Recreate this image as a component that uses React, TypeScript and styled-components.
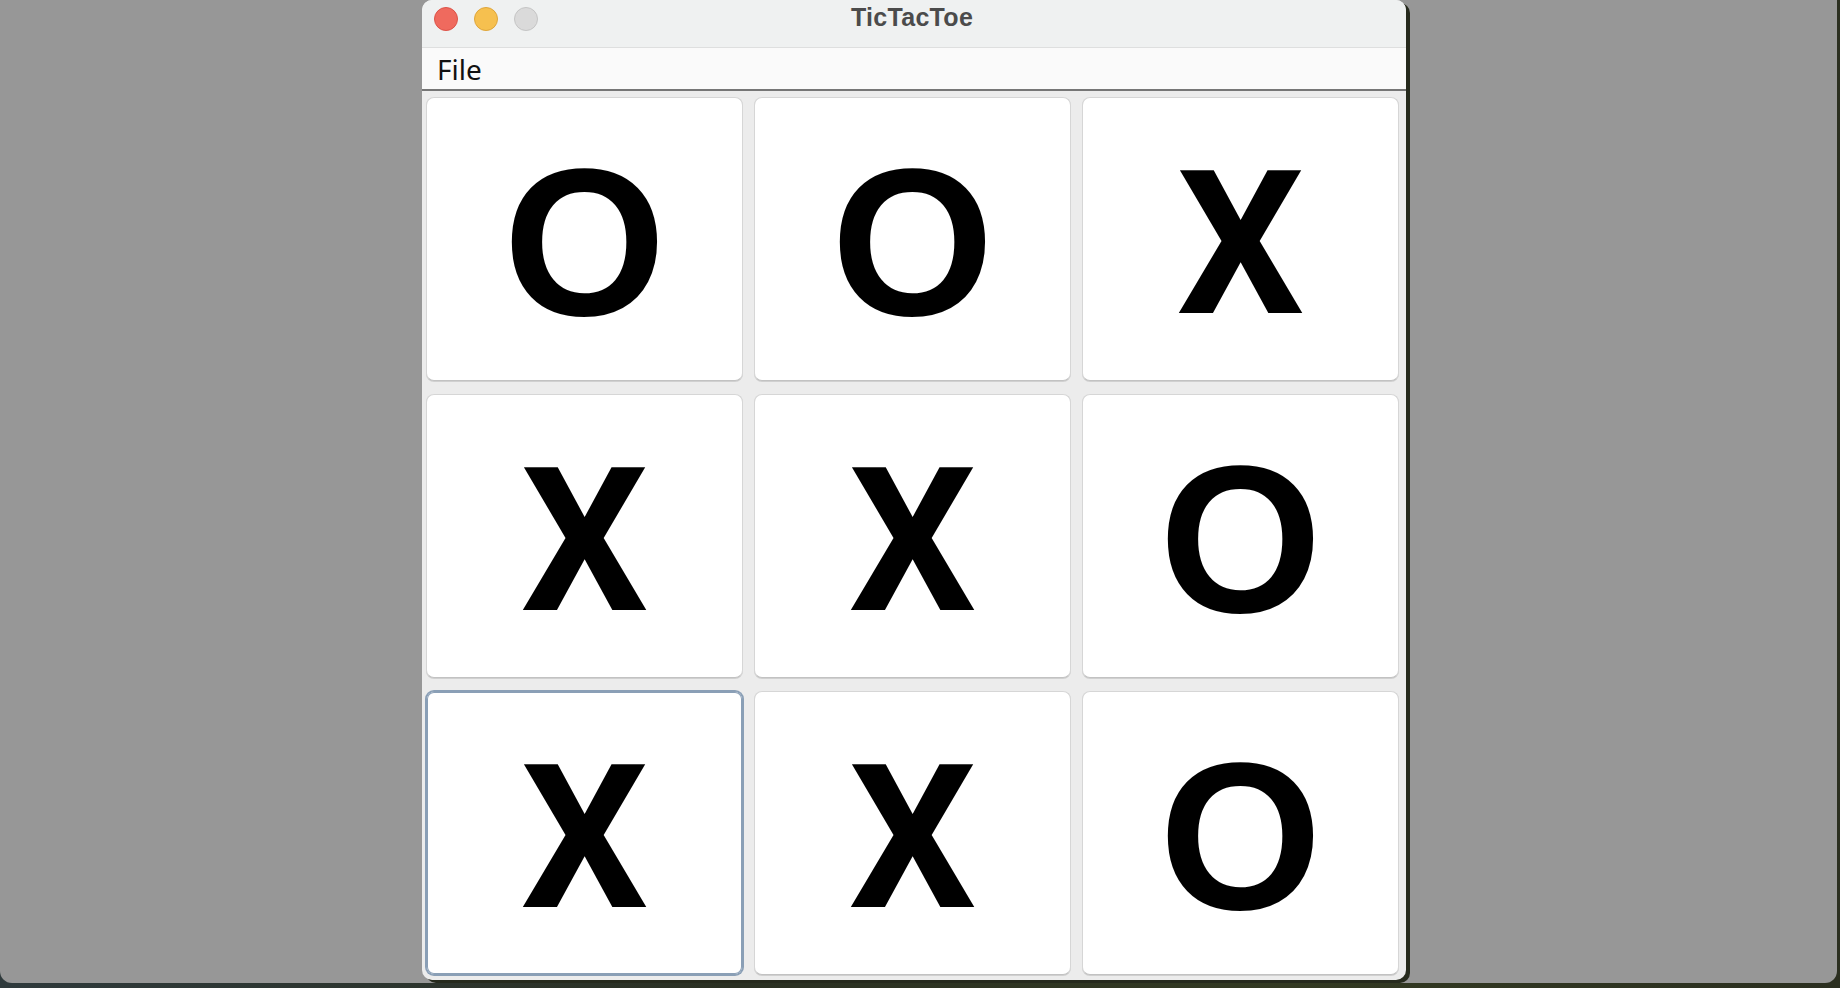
import React from "react";
import styled, { createGlobalStyle } from "styled-components";

const Global = createGlobalStyle`
  html, body { margin: 0; padding: 0; }
  body { width: 1840px; height: 988px; overflow: hidden; background: #2a2e22; }
`;

const Desktop = styled.div`
  width: 1840px;
  height: 988px;
  background: linear-gradient(90deg, #2f3a3c 0%, #2a3022 40%, #333a22 70%, #2b2f20 100%);
  overflow: hidden;
`;

const BackWindow = styled.div`
  width: 1837px;
  height: 983px;
  background: #979797;
  border-radius: 0 0 12px 12px;
  display: flex;
  align-items: flex-start;
  padding-left: 422px;
  box-sizing: border-box;
`;

const Window = styled.div`
  width: 984px;
  height: 980px;
  border-radius: 10px;
  overflow: hidden;
  background: #ececec;
  display: flex;
  flex-direction: column;
  box-shadow: 4px 3px 0 0 #262a1d;
`;

const TitleBar = styled.div`
  height: 47px;
  flex: none;
  background: #eff1f1;
  border-bottom: 1px solid #dedfdf;
  display: grid;
  grid-template-columns: 1fr auto 1fr;
  align-items: start;
`;

const Lights = styled.div`
  display: flex;
  gap: 16px;
  padding: 7px 0 0 12px;
`;

const Light = styled.span<{ $fill: string; $ring: string }>`
  width: 22px;
  height: 22px;
  border-radius: 50%;
  background: ${(p) => p.$fill};
  border: 1px solid ${(p) => p.$ring};
`;

const Title = styled.div`
  font-family: "Liberation Sans", Arial, sans-serif;
  font-weight: 700;
  font-size: 25px;
  line-height: 25px;
  letter-spacing: 0.3px;
  color: #4b4b4b;
  padding-top: 5px;
  margin-left: -4px;
`;

const MenuBar = styled.div`
  height: 41px;
  flex: none;
  background: #fafafa;
  border-bottom: 2px solid #767676;
  display: flex;
  align-items: center;
  padding-left: 15px;
`;

const MenuItem = styled.span`
  font-family: "Noto Sans", "Open Sans", sans-serif;
  font-size: 28px;
  color: #111;
  line-height: 1;
  margin-top: 1px;
`;

const Board = styled.div`
  flex: 1;
  display: grid;
  grid-template-columns: repeat(3, 317px);
  grid-template-rows: repeat(3, 284px);
  column-gap: 11px;
  row-gap: 13px;
  padding: 6px 0 0 4px;
  align-content: start;
`;

const Cell = styled.button<{ $focused?: boolean }>`
  margin: 0;
  padding: 0;
  background: #fff;
  border: 1px solid #d6d6d6;
  border-bottom-color: #c2c2c2;
  border-radius: 8px;
  display: flex;
  align-items: center;
  justify-content: center;
  color: #000;
  box-shadow: ${(p) => (p.$focused ? "0 0 0 1px #8a9fb6, inset 0 0 0 1px #8a9fb6" : "0 1px 0 #d0d0d0")};
  ${(p) => (p.$focused ? "border-color: #8a9fb6;" : "")}
`;

const Mark = styled.span<{ $glyph: string }>`
  display: block;
  font-weight: 700;
  line-height: 1;
  font-family: ${(p) => (p.$glyph === "X" ? "Roboto, 'Liberation Sans', sans-serif" : "'Liberation Sans', Arial, sans-serif")};
  font-size: ${(p) => (p.$glyph === "X" ? "201px" : "209px")};
  margin-top: ${(p) => (p.$glyph === "X" ? "11px" : "6px")};
`;

const board = ["O", "O", "X", "X", "X", "O", "X", "X", "O"];

export default function App() {
  return (
    <>
      <Global />
      <Desktop>
        <BackWindow>
          <Window>
            <TitleBar>
              <Lights>
                <Light $fill="#ef6a5e" $ring="#dc5348" />
                <Light $fill="#f6c04f" $ring="#dea53b" />
                <Light $fill="#dadada" $ring="#c5c5c5" />
              </Lights>
              <Title>TicTacToe</Title>
              <div />
            </TitleBar>
            <MenuBar>
              <MenuItem>File</MenuItem>
            </MenuBar>
            <Board>
              {board.map((v, i) => (
                <Cell key={i} $focused={i === 6}>
                  <Mark $glyph={v}>{v}</Mark>
                </Cell>
              ))}
            </Board>
          </Window>
        </BackWindow>
      </Desktop>
    </>
  );
}
